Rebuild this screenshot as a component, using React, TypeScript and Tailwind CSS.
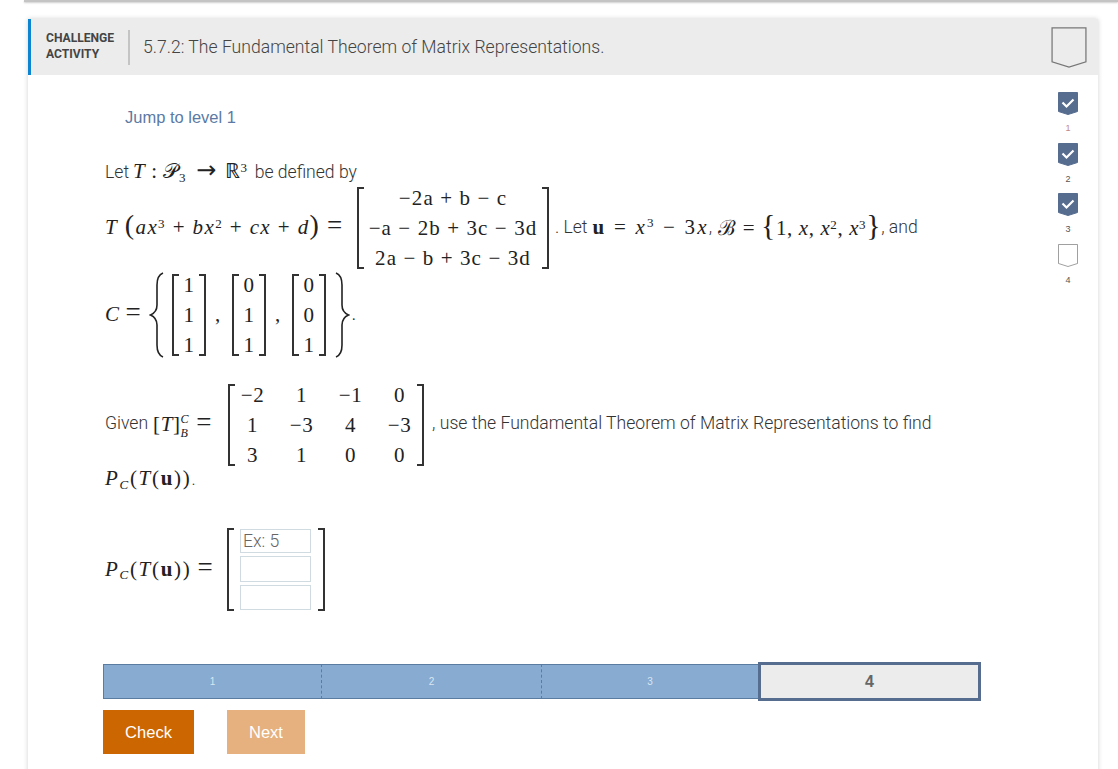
import type { ReactNode } from 'react'

const math = "[font-family:'Liberation_Serif',serif] text-[21px] tracking-[0.6px] text-[#222] font-normal"

function Bookmark({ w, h, filled }: { w: number; h: number; filled?: boolean }) {
  return (
    <svg width={w} height={h} viewBox="0 0 20 23" className="block">
      <path
        d="M.5.5H19.5V19.5L10 22.5.5 19.5Z"
        fill={filled ? '#566d8f' : 'none'}
        stroke={filled ? '#566d8f' : '#777'}
        strokeWidth={filled ? 1 : 0.7}
      />
      {filled && <path d="M4.5 10.5L8.5 14.5L15.5 7.5" fill="none" stroke="#fff" strokeWidth="2.2" />}
    </svg>
  )
}

function Brace({ flip }: { flip?: boolean }) {
  return (
    <svg width="15" height="86" viewBox="0 0 15 86" className={flip ? 'block -scale-x-100' : 'block'}>
      <path d="M14 1C9 3 8 7 8 13V33C8 38 6 41 1.5 43C6 45 8 48 8 53V73C8 79 9 83 14 85" fill="none" stroke="#222" strokeWidth="1.6" />
    </svg>
  )
}

function Matrix({ cols, rows, className }: { cols: string; rows: string[][]; className: string }) {
  return (
    <div className={`flex items-stretch ${className}`}>
      <div className="w-[7px] border-y-2 border-l-2 border-[#333]" />
      <div className={`grid flex-1 content-center items-center justify-items-center pb-[1px] ${cols}`}>
        {rows.flat().map((cell, i) => (
          <span key={i} className="leading-[30px]">{cell}</span>
        ))}
      </div>
      <div className="w-[7px] border-y-2 border-r-2 border-[#333]" />
    </div>
  )
}

function Pc() {
  return (
    <span className={`${math} tracking-[1.7px]`}>
      <i>P</i><sub className="text-[13px] italic">C</sub>(<i>T</i>(<b>u</b>))
    </span>
  )
}

function Eq() {
  return <span className="text-[27px] leading-none">=</span>
}

function Level({ n, done, first }: { n: number; done: boolean; first?: boolean }) {
  return (
    <div className="flex h-[50.5px] flex-col items-center">
      <Bookmark w={20} h={23} filled={done} />
      <span className={`mt-[7px] text-[9px] leading-[12px] [font-family:'Liberation_Sans',sans-serif] ${first ? 'text-[#c08a8a]' : 'text-[#555]'}`}>{n}</span>
    </div>
  )
}

function Row({ children, className }: { children: ReactNode; className: string }) {
  return <div className={`ml-[2px] flex items-center whitespace-nowrap ${className}`}>{children}</div>
}

const inputCls = "w-[71px] border border-[#cfdbe0] px-[2px] text-[17.6px] font-light text-[#333] placeholder:text-[#666] outline-none [font-family:Roboto,sans-serif]"

export default function App() {
  return (
    <div className="h-[769px] w-[1118px] overflow-hidden bg-white text-[17.6px] font-light text-[#333] [font-family:Roboto,sans-serif]">
      <div className="ml-[24px] h-[2px] bg-[#c4c4c4] shadow-[0_1px_2px_rgba(0,0,0,0.2)]" />
      <div className="ml-[28px] mt-[17px] h-[760px] w-[1070px] shadow-[0_0_5px_rgba(0,0,0,0.18)]">
        <header className="flex h-[56px] items-center border-l-[3px] border-[#0d84d0] bg-[#ececec]">
          <div className="ml-[15px] w-[82px] pb-[2px] text-[12.1px] font-bold leading-[16px] text-[#444]">
            CHALLENGE<br />ACTIVITY
          </div>
          <div className="h-[35px] w-[2px] bg-[#c4c4c4]" />
          <h1 className="ml-[13px] text-[17.6px] font-light text-[#444]">5.7.2: The Fundamental Theorem of Matrix Representations.</h1>
          <div className="ml-auto mr-[11px]">
            <Bookmark w={36} h={41} />
          </div>
        </header>

        <div className="flex">
          <main className="w-[952px] pl-[75px]">
            <div className="ml-[22px] mt-[30px] h-[24px] text-[16.5px] font-normal leading-[24px] text-[#5b7aa5] [font-family:'Liberation_Sans',sans-serif]">
              Jump to level 1
            </div>

            <Row className="mt-[31px] h-[24px]">
              <span>Let</span>
              <span className={`ml-[4px] ${math}`}>
                <i>T</i> : 𝒫<sub className="text-[13px]">3</sub>
                <span className="ml-[10px] mr-[8px] text-[24px] leading-none [font-family:'DejaVu_Sans',sans-serif]">→</span>
                ℝ<sup className="text-[13px]">3</sup>
              </span>
              <span className="ml-[7px]">be defined by</span>
            </Row>

            <Row className="mt-[3px] h-[82px]">
              <span className={`w-[252px] pb-[1px] ${math} tracking-[1.4px]`}>
                <i>T</i> <span className="text-[28px] leading-none">(</span><i>ax</i><sup className="text-[13px]">3</sup> + <i>bx</i><sup className="text-[13px]">2</sup> + <i>cx</i> + <i>d</i><span className="text-[28px] leading-none">)</span> <Eq />
              </span>
              <Matrix
                className={`h-[82px] w-[192px] ${math} tracking-[1.1px]`}
                cols="grid-cols-1"
                rows={[['−2a + b − c'], ['−a − 2b + 3c − 3d'], ['2a − b + 3c − 3d']]}
              />
              <span className="ml-[6px] pb-[2px]">. Let</span>
              <span className={`ml-[5px] pb-[1px] ${math} tracking-[2.2px]`}>
                <b>u</b> = <i>x</i><sup className="text-[13px]">3</sup> − 3<i>x</i>
              </span>
              <span className="pb-[2px]">,</span>
              <span className={`ml-[6px] pb-[1px] ${math} tracking-[0.3px]`}>
                ℬ = <span className="text-[30px] leading-none">{'{'}</span>1, <i>x</i>, <i>x</i><sup className="text-[13px]">2</sup>, <i>x</i><sup className="text-[13px]">3</sup><span className="text-[30px] leading-none">{'}'}</span>
              </span>
              <span className="pb-[2px]">, and</span>
            </Row>

            <Row className={`mt-[4px] h-[84px] ${math}`}>
              <span className="w-[44px]"><i>C</i> <Eq /></span>
              <Brace />
              <Matrix className="ml-[8px] h-[82px] w-[34px]" cols="grid-cols-1" rows={[['1'], ['1'], ['1']]} />
              <span className="w-[26px] pr-[2px] text-center">,</span>
              <Matrix className="h-[82px] w-[34px]" cols="grid-cols-1" rows={[['0'], ['1'], ['1']]} />
              <span className="w-[26px] pr-[2px] text-center">,</span>
              <Matrix className="h-[82px] w-[34px]" cols="grid-cols-1" rows={[['0'], ['0'], ['1']]} />
              <div className="ml-[9px]"><Brace flip /></div>
              <span className="ml-[2px] text-[14px]">.</span>
            </Row>

            <Row className="mt-[27px] h-[82px]">
              <span className="pb-[3px]">Given</span>
              <span className={`ml-[5px] flex w-[75px] items-center pb-[1px] ${math}`}>
                <span>[<i>T</i>]</span>
                <span className="flex translate-y-[1px] flex-col text-[12px] leading-[14px]"><i>C</i><i>B</i></span>
                <span className="ml-[7px]"><Eq /></span>
              </span>
              <Matrix
                className={`h-[82px] w-[196px] ${math}`}
                cols="grid-cols-4 -mx-[7px]"
                rows={[['−2', '1', '−1', '0'], ['1', '−3', '4', '−3'], ['3', '1', '0', '0']]}
              />
              <span className="ml-[8px] pb-[3px]">, use the Fundamental Theorem of Matrix Representations to find</span>
            </Row>

            <Row className="mt-[1px] h-[24px]">
              <Pc />
              <span>.</span>
            </Row>

            <Row className="mt-[37px] h-[83px]">
              <span className="flex w-[122px] items-center">
                <Pc />
                <span className={`ml-[6px] ${math}`}><Eq /></span>
              </span>
              <div className="flex h-[83px] w-[98px] items-stretch">
                <div className="w-[7px] border-y-2 border-l-2 border-[#333]" />
                <div className="ml-[6px] flex flex-col justify-between py-[1px]">
                  <input placeholder="Ex: 5" className={`h-[24px] ${inputCls}`} />
                  <input className={`h-[26px] ${inputCls}`} />
                  <input className={`h-[25px] ${inputCls}`} />
                </div>
                <div className="ml-auto w-[7px] border-y-2 border-r-2 border-[#333]" />
              </div>
            </Row>

            <nav className="mt-[53px] flex h-[35px] w-[878px] text-[10px] font-normal text-[#d8e6f2] [font-family:'Liberation_Sans',sans-serif]">
              <div className="flex w-[219px] items-center justify-center border-y border-l border-r border-[#5a7ca0] bg-[#87abd1] [border-right-style:dashed]">1</div>
              <div className="flex w-[220px] items-center justify-center border-y border-r border-[#5a7ca0] bg-[#87abd1] [border-right-style:dashed]">2</div>
              <div className="flex w-[216px] items-center justify-center border-y border-[#5a7ca0] bg-[#87abd1]">3</div>
              <div className="relative z-10 -my-[2px] flex w-[223px] items-center justify-center border-[3px] border-[#566d8f] bg-[#ececec] text-[16px] font-bold text-[#666]">4</div>
            </nav>

            <div className="mt-[11px] flex gap-[33px] text-[16.5px] font-normal text-white [font-family:'Liberation_Sans',sans-serif]">
              <button className="h-[44px] w-[91px] bg-[#cc6600]">Check</button>
              <button className="h-[44px] w-[78px] bg-[#e6b17e]">Next</button>
            </div>
          </main>

          <aside className="flex w-[118px] flex-col items-center pl-[58px] pt-[17px]">
            <Level n={1} done first />
            <Level n={2} done />
            <Level n={3} done />
            <Level n={4} done={false} />
          </aside>
        </div>
      </div>
    </div>
  )
}
